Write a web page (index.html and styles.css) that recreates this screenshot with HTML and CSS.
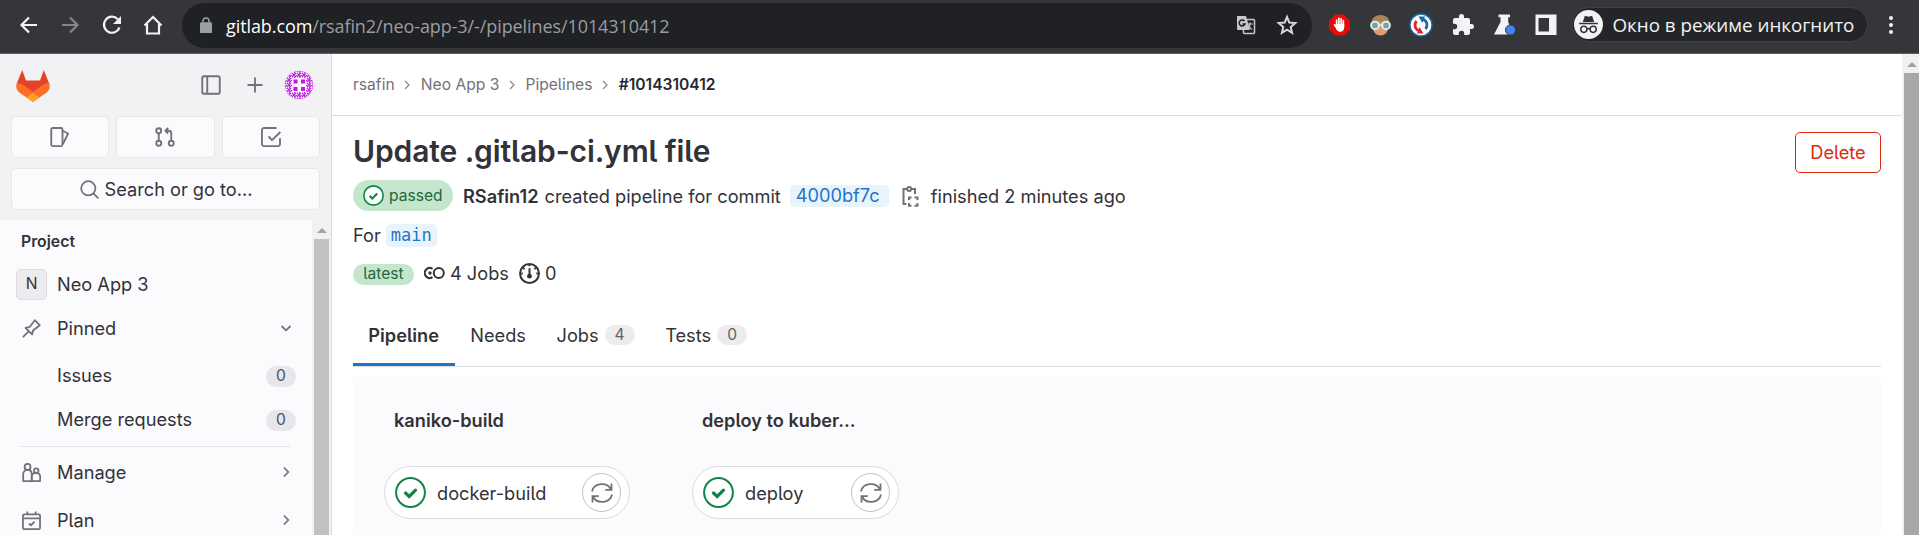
FILE: index.html
```html
<!DOCTYPE html>
<html lang="en">
<head>
<meta charset="utf-8">
<title>Update .gitlab-ci.yml file</title>
<link rel="stylesheet" href="styles.css">
</head>
<body>
<header class="browser">
  <nav class="nav-buttons">
    <svg class="tb" viewBox="0 0 24 24"><path d="M20 12H5M12 4.5L4.500 12l7.500 7.500"/></svg>
    <svg class="tb dim" viewBox="0 0 24 24"><path d="M4 12h15M12 4.500l7.500 7.500-7.500 7.500"/></svg>
    <svg class="tb" viewBox="0 0 24 24"><path d="M17.800 6.200a8 8 0 1 0 1.700 8.300"/><path class="solid" d="M21 3v8h-8z"/></svg>
    <svg class="tb" viewBox="0 0 24 24"><path d="M3.500 12.500L12 4l8.500 8.500M6 11v9.500h12V11"/></svg>
  </nav>
  <div class="omnibox">
    <svg class="lock" viewBox="0 0 12 16"><rect x="0.500" y="6" width="11" height="9.500" rx="1"/><path d="M3 6.500V4a3 3 0 0 1 6 0v2.500"/></svg>
    <div class="url"><span class="host">gitlab.com</span>/rsafin2/neo-app-3/-/pipelines/1014310412</div>
    <svg class="translate" viewBox="0 0 20 20"><rect x="7.500" y="4.500" width="11" height="14" rx="1" fill="none" stroke="#c5c7ca" stroke-width="1.500"/><path d="M1 1h9l4 14H2a1 1 0 0 1-1-1z" fill="#c5c7ca"/><path d="M8.500 6A3 3 0 1 0 9 9H6.500" fill="none" stroke="#202124" stroke-width="1.500"/><path d="M11 9h6M14 7.500V9c0 2-1 4-3 5M12.500 10.500c.7 2 2 3 3.500 4" fill="none" stroke="#c5c7ca" stroke-width="1.200"/></svg>
    <svg class="star" viewBox="0 0 24 24"><path d="M12 4l2.300 5.600 6 .5-4.600 3.900 1.400 5.900-5.100-3.200-5.100 3.200 1.400-5.900-4.600-3.900 6-.5z"/></svg>
  </div>
  <div class="extensions">
    <svg viewBox="0 0 24 24"><path d="M7.500 1h9L23 7.500v9L16.500 23h-9L1 16.500v-9z" fill="#e40d0d"/><path d="M9 14V7M11.400 12V5M13.800 12V5.500M16 14V7.500M6.900 12l2.600 3.500" stroke="#fff" stroke-width="1.800" stroke-linecap="round"/><path d="M8.100 11h8.800v3.500c0 2.500-1.500 4.500-3.900 4.500s-4.900-2-4.900-4.500z" fill="#fff"/></svg>
    <svg viewBox="0 0 24 24"><path d="M2.500 12C2 5 6 1.500 12 1.500S22 5 21.500 12z" fill="#a78459"/><path d="M4.500 9h15v7c0 4-3 7-7.500 7s-7.500-3-7.500-7z" fill="#e29a71"/><circle cx="6.200" cy="12.500" r="4" fill="#6fa3ad" stroke="#e8f1f2" stroke-width="2"/><circle cx="17.800" cy="12.500" r="4" fill="#6fa3ad" stroke="#e8f1f2" stroke-width="2"/><path d="M10 12h4" stroke="#e8f1f2" stroke-width="1.500"/></svg>
    <svg viewBox="0 0 24 24"><circle cx="12" cy="12" r="11" fill="#fff" stroke="#176ba5" stroke-width="1.300"/><path d="M9.500 17.500C5.500 15.500 5 11 7.500 8" fill="none" stroke="#e3242b" stroke-width="2.800"/><path d="M8 20.500h6.500L10.500 14z" fill="#e3242b"/><path d="M14.500 6.500c4 2 4.500 6.500 2 9.500" fill="none" stroke="#176ba5" stroke-width="2.800"/><path d="M16 3.500H9.500l4 6.500z" fill="#176ba5"/></svg>
    <svg viewBox="0 0 24 24"><path d="M20.500 11H19V7a2 2 0 0 0-2-2h-4V3.500a2.500 2.500 0 0 0-5 0V5H4a2 2 0 0 0-2 2v3.800h1.500a2.700 2.700 0 0 1 0 5.400H2V20a2 2 0 0 0 2 2h3.800v-1.500a2.700 2.700 0 0 1 5.400 0V22H17a2 2 0 0 0 2-2v-4h1.500a2.500 2.500 0 0 0 0-5z" fill="#f1f3f4"/></svg>
    <svg viewBox="0 0 24 24"><path d="M5.500 1.500h11.500v2.700h-1.800V9L20 21.500H1L7.500 9V4.200h-2z" fill="#f1f3f4"/><circle cx="17.500" cy="17" r="5" fill="#4285f4" stroke="#35363a"/></svg>
    <svg viewBox="0 0 24 24"><path d="M1.500 1.500h21v20.500h-21zM4.500 5v13.500H15V5z" fill="#f1f3f4" fill-rule="evenodd"/></svg>
  </div>
  <div class="incognito">
    <svg viewBox="0 0 28 28"><circle cx="14" cy="14" r="14" fill="#f1f3f4"/><path d="M8.500 11.500l2-6 3.500 1 3.500-1 2 6zM5 12.300h18v1.500H5z" fill="#303134"/><g fill="none" stroke="#303134" stroke-width="1.400"><circle cx="9.500" cy="18.700" r="3"/><circle cx="18.500" cy="18.700" r="3"/><path d="M12.500 18.500c1-.8 2-.8 3 0"/></g></svg>
    <span>Окно в режиме инкогнито</span>
  </div>
  <svg class="dots" viewBox="0 0 6 20"><circle cx="3" cy="3" r="2"/><circle cx="3" cy="10" r="2"/><circle cx="3" cy="17" r="2"/></svg>
</header>
<div class="page">
  <aside class="sidebar">
    <div class="side-top">
      <div class="side-brand">
        <svg class="tanuki" viewBox="0 0 34 33"><path d="M1 14L6.200 1 10 11.500h14L27.800 1 33 14 17 26z" fill="#e24329"/><path d="M1 13.500a9 9 0 0 0 3 10.500L17 33l13-9a9 9 0 0 0 3-10.500c-3 .7-6 2-8.500 4L17 23l-7.500-5.500c-2.500-2-5.500-3.300-8.500-4z" fill="#fc6d26"/><path d="M10.500 28.500L17 23.800l6.500 4.700L17 33z" fill="#fca326"/></svg>
        <svg class="ic panel" viewBox="0 0 16 16"><rect x="1" y="1" width="14" height="14" rx="1.500"/><path d="M5 1v14"/></svg>
        <svg class="ic plus" viewBox="0 0 16 16"><path d="M8 2v12M2 8h12"/></svg>
        <svg class="avatar" viewBox="0 0 30 30"><defs><pattern id="tile" width="5" height="5" x="0" y="0" patternUnits="userSpaceOnUse"><path d="M0 0l2 2M5 0L3 2M0 5l2-2M5 5L3 3M2.500 0v1M0 2.500h1" stroke="#c026e0" stroke-width="1.300"/></pattern><clipPath id="round"><circle cx="15" cy="15" r="14"/></clipPath></defs><circle cx="15" cy="15" r="14.500" fill="#fff" stroke="#e4dfe8"/><g clip-path="url(#round)"><rect width="30" height="30" fill="url(#tile)"/></g><rect x="8" y="8" width="14" height="14" fill="#fbf4fd"/><path d="M9.500 9.500h4v4h-4zM17 9.500h4v4h-4zM9.500 17h4v4h-4zM17 17h4v4h-4z" fill="#c01be0"/></svg>
      </div>
      <div class="shortcuts">
        <div class="shortcut"><svg class="ic" viewBox="0 0 16 16"><rect x="1" y="0.750" width="9" height="14.500" rx="1.200"/><path d="M10 3l4.500 2.200-4.200 8.500"/></svg></div>
        <div class="shortcut"><svg class="ic" viewBox="0 0 16 16"><circle cx="3" cy="3" r="2"/><circle cx="3" cy="13" r="2"/><circle cx="13" cy="13" r="2"/><path d="M3 5v6M13 11V5a2 2 0 0 0-2-2H8.500M10.500 .800L8.300 3l2.200 2.200"/></svg></div>
        <div class="shortcut"><svg class="ic" viewBox="0 0 16 16"><path d="M12.500.750H2.500A1.700 1.700 0 0 0 .750 2.500v11a1.700 1.700 0 0 0 1.700 1.750h11a1.700 1.700 0 0 0 1.750-1.750V9M6 7.500l2.800 3L15.500 4"/></svg></div>
      </div>
      <div class="search"><svg class="ic" viewBox="0 0 16 16"><circle cx="7" cy="7" r="6"/><path d="M11.500 11.500l4 4"/></svg><span>Search or go to...</span></div>
    </div>
    <div class="side-body">
      <div class="menu">
        <div class="menu-title">Project</div>
        <div class="row project"><span class="letter">N</span><span>Neo App 3</span></div>
        <div class="row pinned"><svg class="ic" viewBox="0 0 16 16"><path d="M.800 15.200l4.800-4.800M3 7.500l5.500 5.500.8-3.300 5.700-4.400L10.800 1 6.500 6.700z"/></svg><span>Pinned</span><svg class="chev" viewBox="0 0 12 12"><path d="M1.500 4L6 8.300 10.500 4"/></svg></div>
        <div class="row sub issues"><span>Issues</span><b class="badge">0</b></div>
        <div class="row sub merges"><span>Merge requests</span><b class="badge">0</b></div>
        <div class="divider"></div>
        <div class="row manage"><svg class="ic" viewBox="0 0 16 16"><circle cx="4.700" cy="3.300" r="2.500"/><path d="M1 15.200V9.500c0-2 1.500-3.700 3.700-3.700s3.500 1.700 3.500 3.700v5.700z"/><circle cx="12" cy="6.500" r="1.900"/><path d="M8.200 15.200v-3.500c0-2 1.500-3.300 3.600-3.300s3.500 1.300 3.500 3.300v3.500z"/></svg><span>Manage</span><svg class="chev" viewBox="0 0 12 12"><path d="M4 1.500L8.300 6 4 10.500"/></svg></div>
        <div class="row plan"><svg class="ic" viewBox="0 0 16 16"><rect x="0.800" y="2.800" width="14.400" height="12.500" rx="1"/><path d="M1 6.300h14M4.500 .500v2M11.500 .500v2M5.800 10.500l1.700 1.500 3-3"/></svg><span>Plan</span><svg class="chev" viewBox="0 0 12 12"><path d="M4 1.500L8.300 6 4 10.500"/></svg></div>
      </div>
      <div class="scroll side-scroll"><i class="arrow"></i><i class="thumb"></i></div>
    </div>
  </aside>
  <main class="main">
    <div class="crumbs">
      <span>rsafin</span><svg viewBox="0 0 8 12"><path d="M2 2L6 6 2 10"/></svg><span>Neo App 3</span><svg viewBox="0 0 8 12"><path d="M2 2L6 6 2 10"/></svg><span>Pipelines</span><svg viewBox="0 0 8 12"><path d="M2 2L6 6 2 10"/></svg><strong>#1014310412</strong>
    </div>
    <div class="content">
      <div class="heading"><h1>Update .gitlab-ci.yml file</h1><button class="delete">Delete</button></div>
      <div class="line status-line">
        <span class="passed"><svg viewBox="0 0 20 20"><circle cx="10" cy="10" r="9.200" fill="#fff" stroke="#108548" stroke-width="1.500"/><path d="M6.200 10.300l2.600 2.500 4.700-4.600" fill="none" stroke="#108548" stroke-width="2"/></svg><span>passed</span></span>
        <strong class="author">RSafin12</strong><span class="created">created pipeline for commit</span><span class="sha">4000bf7c</span>
        <svg class="copy" viewBox="0 0 17 21"><path d="M5 3H1.500v15H4.500M9.500 3h3.500v5"/><circle cx="7.200" cy="3" r="2"/><path d="M7 14v-2.500h2.500M12.500 11.500H15.500V14M15.500 17v2.800h-3M9.500 19.800H7V17"/></svg>
        <span class="finished">finished 2 minutes ago</span>
      </div>
      <div class="line for-line"><span>For</span><code class="branch">main</code></div>
      <div class="line stats">
        <span class="latest">latest</span>
        <svg class="jobs-icon" viewBox="0 0 21 14"><path d="M8.500 2.800A5 5 0 1 0 8.500 11.200"/><circle cx="14.800" cy="7" r="5"/><circle class="solid" cx="6" cy="7" r="1.700"/></svg>
        <span class="jobs-text">4 Jobs</span>
        <svg class="gauge" viewBox="0 0 20 20"><circle cx="10" cy="10" r="9"/><path d="M10 5v7M10 1v2M4 4.500l1.300 1.300M16 4.500l-1.300 1.300M2 10h1.500M16.500 10H18"/><circle class="solid" cx="10" cy="12.500" r="2.300"/></svg>
        <span>0</span>
      </div>
      <div class="tabs">
        <div class="tab active">Pipeline</div><div class="tab needs">Needs</div><div class="tab jobs">Jobs<b class="badge grey">4</b></div><div class="tab tests">Tests<b class="badge grey">0</b></div>
      </div>
      <div class="graph">
        <section class="stage">
          <h2>kaniko-build</h2>
          <div class="job wide"><svg class="ok" viewBox="0 0 31 31"><circle cx="15.500" cy="15.500" r="14.400"/><path d="M10.500 16l3.700 3.500 6.300-6.300"/></svg><span>docker-build</span><span class="retry"><svg viewBox="0 0 22 22"><path d="M1 9.500A10 9 0 0 1 20 7.500M21 12.500A10 9 0 0 1 2 14.500M20.500 1.500v6.300h-6.300M1.500 20.500v-6.300h6.300"/></svg></span></div>
        </section>
        <section class="stage">
          <h2>deploy to kuber...</h2>
          <div class="job narrow"><svg class="ok" viewBox="0 0 31 31"><circle cx="15.500" cy="15.500" r="14.400"/><path d="M10.500 16l3.700 3.500 6.300-6.300"/></svg><span>deploy</span><span class="retry"><svg viewBox="0 0 22 22"><path d="M1 9.500A10 9 0 0 1 20 7.500M21 12.500A10 9 0 0 1 2 14.500M20.500 1.500v6.300h-6.300M1.500 20.500v-6.300h6.300"/></svg></span></div>
        </section>
      </div>
    </div>
  </main>
  <div class="scroll page-scroll"><i class="arrow"></i><i class="thumb"></i></div>
</div>
</body>
</html>
```
FILE: styles.css
```css
* { box-sizing: border-box; }
html, body { margin: 0; height: 535px; overflow: hidden; }
body { font: 18.2px/26px Inter, "Noto Sans", sans-serif; font-feature-settings: "cv05" 1; color: #333238; display: flex; flex-direction: column; background: #fff; }
svg { display: block; flex: none; }
i { display: block; }
span, strong, code { white-space: nowrap; }

.browser { height: 54px; flex: none; display: flex; align-items: center; background: #35363a; border-bottom: 1px solid #5f6064; padding-bottom: 4px; font-family: "Open Sans", "Noto Sans", sans-serif; }
.nav-buttons { display: flex; gap: 17.500px; padding-left: 16.500px; width: 182px; }
.tb { width: 24px; height: 24px; fill: none; stroke: #f1f3f4; stroke-width: 2.200; }
.tb .solid { fill: #f1f3f4; stroke: none; }
.tb.dim { stroke: #85868a; }
.omnibox { width: 1130px; height: 45px; margin-top: 2px; border-radius: 23px; background: #202124; display: flex; align-items: center; padding: 0 13px 0 18px; }
.lock { width: 12px; height: 16px; margin-right: 14px; margin-bottom: 2px; fill: #9aa0a6; stroke: #9aa0a6; stroke-width: 1.500; }
.lock path { fill: none; }
.url { flex: 1; font-size: 18px; color: #9a9da1; white-space: nowrap; letter-spacing: -.09px; }
.host { color: #fff; }
.translate { width: 20px; height: 20px; margin-right: 19px; margin-bottom: 1px; }
.star { width: 24px; height: 24px; margin-bottom: 1px; fill: none; stroke: #d5d7da; stroke-width: 2; }
.extensions { display: flex; gap: 17.700px; margin-left: 16px; }
.extensions svg { width: 24px; height: 24px; }
.extensions svg:nth-child(-n+2) { width: 23px; }
.incognito { height: 35px; width: 296px; margin-left: 14px; display: flex; align-items: center; gap: 9px; border: 1px solid #404145; border-radius: 18px; background: #242529; color: #f1f3f4; font-size: 18.800px; }
.incognito svg { width: 29px; height: 29px; margin-left: 1px; }
.dots { width: 6px; height: 20px; margin-left: 20px; fill: #f1f3f4; }

.page { flex: 1; display: flex; min-height: 0; }
.sidebar { width: 332px; flex: none; background: #fbfafd; border-right: 1px solid #dcdcde; display: flex; flex-direction: column; }
.side-top { height: 166px; flex: none; background: #f2f2f4; padding: 15px 11px 0; }
.side-brand { height: 32px; display: flex; align-items: center; }
.tanuki { width: 34px; height: 33px; margin-left: 5px; }
.ic { width: 20px; height: 20px; fill: none; stroke: #737278; stroke-width: 1.500; stroke-linejoin: round; }
.panel { margin-left: 151px; }
.plus { margin-left: 24px; }
.avatar { width: 30px; height: 30px; margin-left: 19px; }
.shortcuts { display: flex; gap: 7px; margin-top: 15px; }
.shortcut, .search { height: 42px; background: #fbfafd; border: 1px solid #e7e6e9; border-radius: 5px; display: flex; align-items: center; justify-content: center; }
.shortcut { flex: 1; }
.search { margin-top: 10px; gap: 6px; padding-left: 1px; }
.search .ic { width: 19px; height: 19px; }
.side-body { flex: 1; display: flex; min-height: 0; }
.menu { flex: 1; padding: 9px 16px 0 16px; overflow: hidden; }
.menu-title { font-size: 15.800px; font-weight: 600; padding-left: 5px; }
.row { display: flex; align-items: center; height: 44px; }
.row .ic { width: 19px; height: 19px; margin: 1px 16px 0 6px; }
.row .chev, .row .badge { margin-left: auto; }
.project { margin-top: 7px; }
.letter { width: 31px; height: 31px; margin-right: 10px; border: 1px solid #dcdcde; border-radius: 5px; background: #ececef; font-size: 15.600px; display: flex; align-items: center; justify-content: center; }
.chev { width: 12px; height: 12px; margin-right: 4px; fill: none; stroke: #737278; stroke-width: 1.800; }
.sub { padding-left: 41px; }
.issues { height: 50px; }
.merges { height: 38px; }
.badge { width: 30px; height: 21px; border-radius: 11px; background: #e7e6eb; color: #535158; font-size: 15.600px; font-weight: 400; line-height: 20px; text-align: center; }
.sub .badge { margin-top: 3px; }
.grey { background: #ececef; color: #626168; width: 30px; height: 20px; }
.divider { height: 1px; background: #e3e2e7; margin: 8px 6px 1px 5px; }
.manage { height: 48px; }
.plan { height: 47px; }
.scroll { background: #f1f1f1; }
.arrow { width: 0; height: 0; margin: 8px auto 6px; border: 5px solid transparent; border-top: 0; border-bottom-color: #a3a3a3; }
.side-scroll { width: 19px; padding: 0 2px; }
.thumb { height: 462px; background: #c1c1c1; }
.side-body .thumb { height: 296px; }

.main { flex: 1; min-width: 0; }
.crumbs { height: 62px; border-bottom: 1px solid #dcdcde; display: flex; align-items: center; padding-left: 21px; font-size: 15.600px; color: #737278; }
.crumbs svg { width: 8px; height: 12px; margin: 0 9.500px 0 8.700px; fill: none; stroke: #89888d; stroke-width: 1.200; }
.crumbs strong { font-weight: 600; color: #28272d; }
.content { padding: 16px 21px 0 21px; }
.heading { display: flex; justify-content: space-between; }
h1 { margin: 0; font-size: 30px; line-height: 38px; font-weight: 600; letter-spacing: -.1px; }
.delete { width: 86px; height: 41px; background: #fff; border: 1px solid #dd2b0e; border-radius: 5px; color: #dd2b0e; font: inherit; padding: 0 0 2px; }
.line { display: flex; align-items: center; }
.status-line { height: 31px; margin-top: 7px; }
.passed { width: 100px; height: 31px; border-radius: 16px; background: #c3e6cd; color: #24663b; display: flex; align-items: center; gap: 5px; padding-left: 10px; font-size: 15.600px; }
.passed svg { width: 21px; height: 21px; }
.author { font-weight: 600; margin: 0 6px 0 10px; }
.sha { width: 99px; height: 22px; margin-left: 9px; padding-left: 6px; border-radius: 5px; background: #e9f3fc; color: #1f75cb; line-height: 21px; }
.copy { width: 17px; height: 21px; margin: 2px 12px 0 13px; fill: none; stroke: #737278; stroke-width: 2; }
.for-line { margin-top: 11px; gap: 5px; }
.branch { width: 51px; height: 23px; border-radius: 5px; background: #e9f3fc; color: #1f75cb; font: 17px/23px "DejaVu Sans Mono", monospace; text-align: center; }
.stats { margin-top: 12px; }
.latest { width: 61px; height: 21px; margin-top: 3px; border-radius: 11px; background: #c3e6cd; color: #24663b; font-size: 15.600px; line-height: 20px; text-align: center; }
.jobs-icon { width: 21px; height: 14px; margin: 0 5px 0 10px; fill: none; stroke: #333238; stroke-width: 2; }
.gauge { width: 21px; height: 21px; margin: 0 5px 0 10px; fill: none; stroke: #333238; stroke-width: 1.900; }
.jobs-icon .solid, .gauge .solid { fill: #333238; stroke: none; }
.tabs { height: 64px; margin-top: 17px; border-bottom: 1px solid #dcdcde; display: flex; }
.tab { height: 63px; padding: 0 15.300px; display: flex; align-items: center; gap: 6px; }
.active { width: 102px; font-weight: 600; border-bottom: 3px solid #1f75cb; padding-top: 3px; }
.graph { height: 158px; margin-top: 10px; background: #fbfafd; display: flex; padding: 30px 31px 0; }
.stage { width: 308px; }
h2 { margin: 0 0 33px 10px; font-size: 18.200px; line-height: 26px; font-weight: 600; }
.job { height: 53px; border: 1px solid #dcdcde; border-radius: 27px; background: #fff; display: flex; align-items: center; padding: 0 8px 0 10px; }
.wide { width: 246px; }
.narrow { width: 207px; }
.ok { width: 31px; height: 31px; margin-right: 11px; fill: none; stroke: #108548; stroke-width: 2; }
.ok path { stroke-width: 3.200; stroke-linecap: round; }
.retry { width: 39px; height: 39px; margin-left: auto; border: 1px solid #bfbfc3; border-radius: 50%; display: flex; align-items: center; justify-content: center; }
.retry svg { width: 22px; height: 22px; fill: none; stroke: #737278; stroke-width: 1.800; }
.page-scroll { width: 17px; padding-left: 2px; }
.page-scroll .thumb { background: #a8a8a8; }
```
